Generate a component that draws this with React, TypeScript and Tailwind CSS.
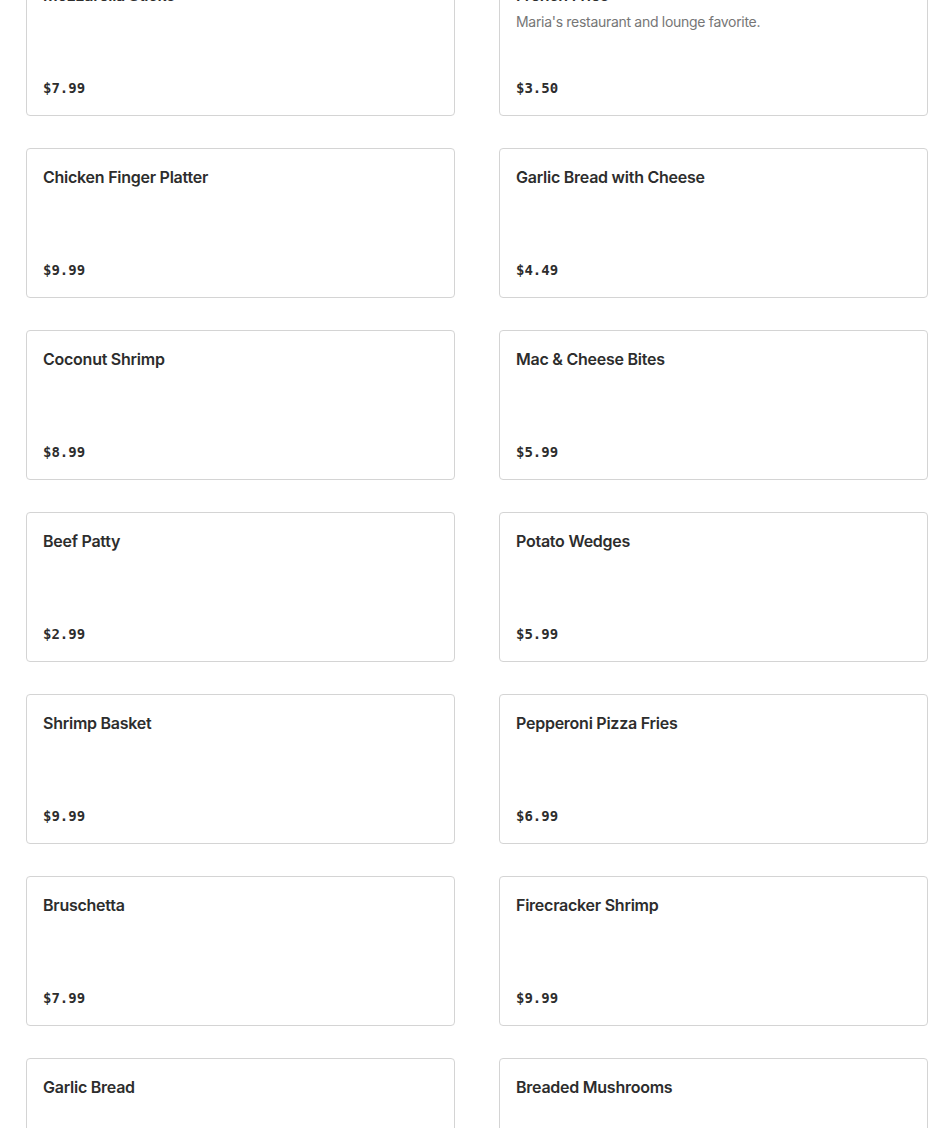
import React from "react";

type Item = { name: string; price: string; desc?: string };

const items: Item[] = [
  { name: "Mozzarella Sticks", price: "$7.99" },
  { name: "French Fries", price: "$3.50", desc: "Maria's restaurant and lounge favorite." },
  { name: "Chicken Finger Platter", price: "$9.99" },
  { name: "Garlic Bread with Cheese", price: "$4.49" },
  { name: "Coconut Shrimp", price: "$8.99" },
  { name: "Mac & Cheese Bites", price: "$5.99" },
  { name: "Beef Patty", price: "$2.99" },
  { name: "Potato Wedges", price: "$5.99" },
  { name: "Shrimp Basket", price: "$9.99" },
  { name: "Pepperoni Pizza Fries", price: "$6.99" },
  { name: "Bruschetta", price: "$7.99" },
  { name: "Firecracker Shrimp", price: "$9.99" },
  { name: "Garlic Bread", price: "$5.99" },
  { name: "Breaded Mushrooms", price: "$6.99" },
];

export default function App() {
  return (
    <div className="min-h-screen bg-white overflow-hidden" style={{ fontFamily: "Inter, 'Liberation Sans', Arial, sans-serif" }}>
      <div className="mt-[-34px] pl-[26px] pr-[22px] grid grid-cols-2 gap-x-[44px] gap-y-[32px]">
        {items.map((it, i) => (
          <div key={i} className="h-[150px] border border-[#d4d4d4] rounded-[4px] bg-white px-4 py-4 flex flex-col justify-between">
            <div>
              <div className="text-[16px] leading-6 font-semibold tracking-[-0.25px] text-[#2d2d2d]">{it.name}</div>
              {it.desc && (
                <div className="mt-[5px] text-[14px] leading-5 tracking-[-0.3px] text-[#767676]">{it.desc}</div>
              )}
            </div>
            <div className="text-[14px] leading-5 font-bold text-[#2d2d2d] -mt-px mb-px" style={{ fontFamily: "'DejaVu Sans Mono', 'Liberation Mono', monospace" }}>
              {it.price}
            </div>
          </div>
        ))}
      </div>
    </div>
  );
}
